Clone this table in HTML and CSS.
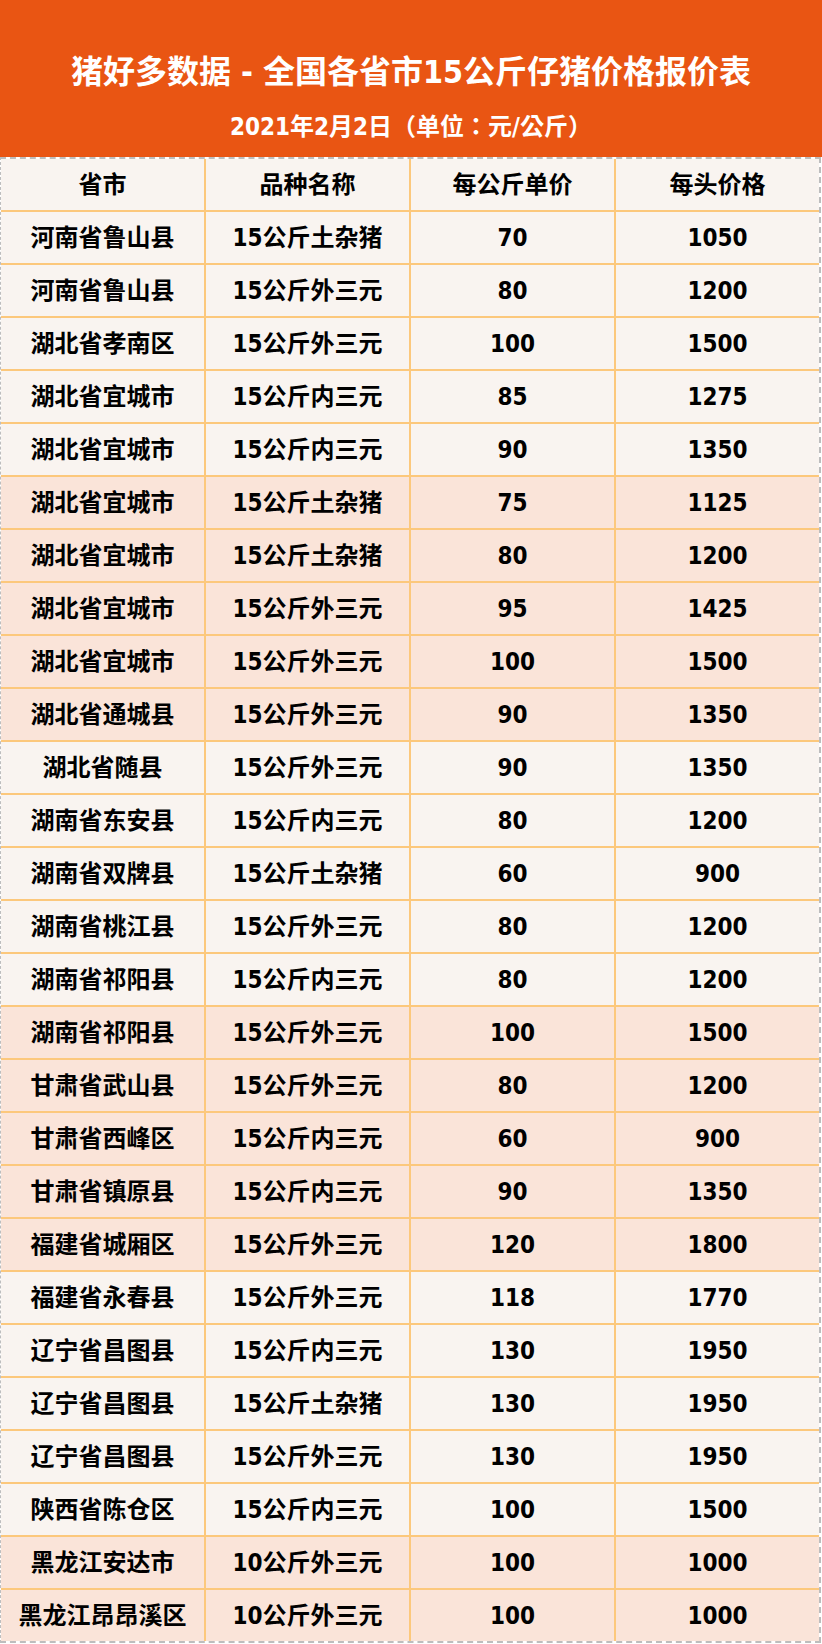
FILE: index.html
```html
<!DOCTYPE html>
<html lang="zh-CN">
<head>
<meta charset="utf-8">
<title>猪好多数据 - 全国各省市15公斤仔猪价格报价表</title>
<link rel="stylesheet" href="styles.css">
</head>
<body>
<div class="sheet">
  <header class="banner">
    <h1 class="title">猪好多数据 - 全国各省市15公斤仔猪价格报价表</h1>
    <p class="subtitle" lang="zh-TW">2021年2月2日（单位：元/公斤）</p>
  </header>
  <div class="table">
    <div class="row head"><div class="cell">省市</div><div class="cell">品种名称</div><div class="cell">每公斤单价</div><div class="cell">每头价格</div></div>
    <div class="row"><div class="cell">河南省鲁山县</div><div class="cell">15公斤土杂猪</div><div class="cell">70</div><div class="cell">1050</div></div>
    <div class="row"><div class="cell">河南省鲁山县</div><div class="cell">15公斤外三元</div><div class="cell">80</div><div class="cell">1200</div></div>
    <div class="row"><div class="cell">湖北省孝南区</div><div class="cell">15公斤外三元</div><div class="cell">100</div><div class="cell">1500</div></div>
    <div class="row"><div class="cell">湖北省宜城市</div><div class="cell">15公斤内三元</div><div class="cell">85</div><div class="cell">1275</div></div>
    <div class="row"><div class="cell">湖北省宜城市</div><div class="cell">15公斤内三元</div><div class="cell">90</div><div class="cell">1350</div></div>
    <div class="row alt"><div class="cell">湖北省宜城市</div><div class="cell">15公斤土杂猪</div><div class="cell">75</div><div class="cell">1125</div></div>
    <div class="row alt"><div class="cell">湖北省宜城市</div><div class="cell">15公斤土杂猪</div><div class="cell">80</div><div class="cell">1200</div></div>
    <div class="row alt"><div class="cell">湖北省宜城市</div><div class="cell">15公斤外三元</div><div class="cell">95</div><div class="cell">1425</div></div>
    <div class="row alt"><div class="cell">湖北省宜城市</div><div class="cell">15公斤外三元</div><div class="cell">100</div><div class="cell">1500</div></div>
    <div class="row alt"><div class="cell">湖北省通城县</div><div class="cell">15公斤外三元</div><div class="cell">90</div><div class="cell">1350</div></div>
    <div class="row"><div class="cell">湖北省随县</div><div class="cell">15公斤外三元</div><div class="cell">90</div><div class="cell">1350</div></div>
    <div class="row"><div class="cell">湖南省东安县</div><div class="cell">15公斤内三元</div><div class="cell">80</div><div class="cell">1200</div></div>
    <div class="row"><div class="cell">湖南省双牌县</div><div class="cell">15公斤土杂猪</div><div class="cell">60</div><div class="cell">900</div></div>
    <div class="row"><div class="cell">湖南省桃江县</div><div class="cell">15公斤外三元</div><div class="cell">80</div><div class="cell">1200</div></div>
    <div class="row"><div class="cell">湖南省祁阳县</div><div class="cell">15公斤内三元</div><div class="cell">80</div><div class="cell">1200</div></div>
    <div class="row alt"><div class="cell">湖南省祁阳县</div><div class="cell">15公斤外三元</div><div class="cell">100</div><div class="cell">1500</div></div>
    <div class="row alt"><div class="cell">甘肃省武山县</div><div class="cell">15公斤外三元</div><div class="cell">80</div><div class="cell">1200</div></div>
    <div class="row alt"><div class="cell">甘肃省西峰区</div><div class="cell">15公斤内三元</div><div class="cell">60</div><div class="cell">900</div></div>
    <div class="row alt"><div class="cell">甘肃省镇原县</div><div class="cell">15公斤内三元</div><div class="cell">90</div><div class="cell">1350</div></div>
    <div class="row alt"><div class="cell">福建省城厢区</div><div class="cell">15公斤外三元</div><div class="cell">120</div><div class="cell">1800</div></div>
    <div class="row"><div class="cell">福建省永春县</div><div class="cell">15公斤外三元</div><div class="cell">118</div><div class="cell">1770</div></div>
    <div class="row"><div class="cell">辽宁省昌图县</div><div class="cell">15公斤内三元</div><div class="cell">130</div><div class="cell">1950</div></div>
    <div class="row"><div class="cell">辽宁省昌图县</div><div class="cell">15公斤土杂猪</div><div class="cell">130</div><div class="cell">1950</div></div>
    <div class="row"><div class="cell">辽宁省昌图县</div><div class="cell">15公斤外三元</div><div class="cell">130</div><div class="cell">1950</div></div>
    <div class="row"><div class="cell">陕西省陈仓区</div><div class="cell">15公斤内三元</div><div class="cell">100</div><div class="cell">1500</div></div>
    <div class="row alt"><div class="cell">黑龙江安达市</div><div class="cell">10公斤外三元</div><div class="cell">100</div><div class="cell">1000</div></div>
    <div class="row alt last"><div class="cell">黑龙江昂昂溪区</div><div class="cell">10公斤外三元</div><div class="cell">100</div><div class="cell">1000</div></div>
  </div>
</div>
</body>
</html>
```

FILE: styles.css
```css
html, body {
  margin: 0;
  padding: 0;
  background: #ffffff;
}

body {
  font-family: "DejaVu Sans Condensed", "Noto Sans CJK SC", sans-serif;
  font-weight: bold;
  color: #000000;
}

.sheet {
  width: 822px;
}

.banner {
  height: 157px;
  background: #e95513;
  color: #ffffff;
  display: flex;
  flex-direction: column;
  align-items: center;
  box-sizing: border-box;
  padding-top: 52px;
}

.title {
  margin: 0;
  font-size: 32px;
  line-height: 40px;
  height: 40px;
  font-weight: bold;
  white-space: nowrap;
}

.subtitle {
  margin: 20px 0 0;
  font-family: "DejaVu Sans Condensed", "Noto Sans CJK TC", "Noto Sans CJK SC", sans-serif;
  font-size: 24px;
  line-height: 30px;
  height: 30px;
  white-space: nowrap;
}

.table {
  width: 821px;
  box-sizing: border-box;
  border: 2px dashed #bdbdbd;
  border-left-width: 1px;
}

.row {
  display: grid;
  grid-template-columns: 205px 205px 205px 203px;
  height: 51px;
  border-bottom: 2px solid #fcc87c;
  background: #f9f4f0;
}

.row.alt {
  background: #fae4d9;
}

.row.last {
  border-bottom: none;
}

.cell {
  display: flex;
  align-items: center;
  justify-content: center;
  font-size: 24px;
  line-height: 1;
  white-space: nowrap;
  border-right: 2px solid #fcc87c;
}

.cell:last-child {
  border-right: none;
}
```
